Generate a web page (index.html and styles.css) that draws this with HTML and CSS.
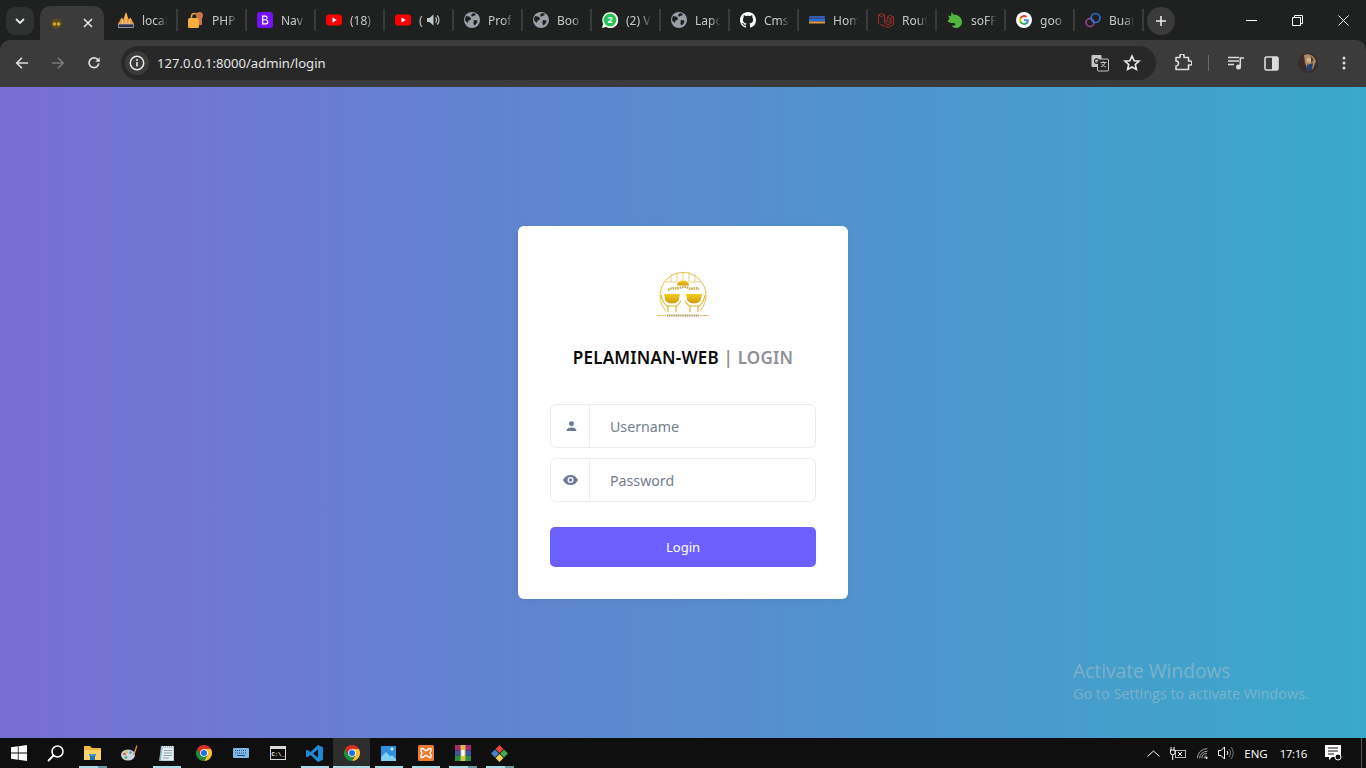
FILE: index.html
```html
<!DOCTYPE html>
<html lang="en">
  <head>
    <meta charset="UTF-8" />
    <meta name="viewport" content="width=device-width, initial-scale=1.0" />
    <title>Pelaminan-Web | Login</title>
    <link rel="stylesheet" href="styles.css">
  </head>
  <body>
    <svg class="defs" width="0" height="0">
      <symbol id="globe" viewBox="0 0 16 16">
        <circle cx="8" cy="8" r="8" fill="#9aa0a6" />
        <path d="M2 4l3 .5 2 1.500-.5 2-2 .5-.5 2.500L1.500 9 1 7zM9 1l3 1-1 1.500-2 .5L8 5 7 3zM10 8l3.500 .5-.5 2.500-2.500 2.500-1-1.500V10z" fill="#1f2020" />
      </symbol>
      <symbol id="youtube" viewBox="0 0 16 16">
        <rect y="2.500" width="16" height="11" rx="3" fill="#f00" />
        <path d="M6.500 5.500L10.800 8l-4.300 2.500z" fill="#fff" />
      </symbol>
      <symbol id="chrome" viewBox="0 0 48 48">
        <path d="M44.800 12H24l10.400 18L24 48a24 24 0 0 0 20.800-36z" fill="#fbc02d" />
        <path d="M3.200 12A24 24 0 0 0 24 48l10.400-18-20.800 0z" fill="#1e8e3e" />
        <path d="M24 0A24 24 0 0 0 3.200 12L13.600 30 24 12h20.800A24 24 0 0 0 24 0z" fill="#d93025" />
        <circle cx="24" cy="24" r="11.500" fill="#fff" />
        <circle cx="24" cy="24" r="9" fill="#1a73e8" />
      </symbol>
    </svg>

    <div class="browser">
      <header class="tabstrip">
        <button class="tab-search">
          <svg width="12" height="12" viewBox="0 0 12 12"><path d="M2 4l4 4 4-4" fill="none" stroke="#e8eaed" stroke-width="1.800" /></svg>
        </button>

        <div class="tab tab-active">
          <svg class="favicon-small" viewBox="0 0 12 12">
            <circle cx="6" cy="6" r="5.800" fill="#5a4d1c" />
            <circle cx="3.800" cy="6.500" r="1.900" fill="#d6ab22" />
            <circle cx="8.200" cy="6.500" r="1.900" fill="#d6ab22" />
          </svg>
          <svg class="tab-close" width="10" height="10" viewBox="0 0 10 10"><path d="M1 1l8 8M9 1L1 9" stroke="#e8eaed" stroke-width="1.500" /></svg>
        </div>

        <div class="tab tab-first">
          <svg class="favicon" viewBox="0 0 16 16">
            <path d="M0 12L3.500 5.500 5 8 8 0l3 8 1.500-2.500L16 12z" fill="#f0962e" />
            <path d="M8 1.500V12M4 6.500L5 12M12 6.500L11 12" stroke="#f7e6c8" stroke-width=".8" />
            <rect x=".5" y="12" width="15" height="3.500" fill="#2c3147" stroke="#b8bdd0" stroke-width=".7" />
          </svg>
          <span class="tab-title">local</span>
        </div>
        <div class="tab">
          <svg class="favicon" viewBox="0 0 16 16">
            <path d="M3.500 6V4.500A3 3 0 0 1 9.500 4.500V6" fill="none" stroke="#e8a24a" stroke-width="1.500" />
            <circle cx="11.500" cy="3.500" r="3.500" fill="#c8764a" />
            <rect y="6" width="11" height="10" rx="1.500" fill="#f5ad3b" />
            <rect x="11" y="6" width="3" height="7" fill="#c8764a" />
          </svg>
          <span class="tab-title">PHP</span>
        </div>
        <div class="tab">
          <svg class="favicon" viewBox="0 0 16 16">
            <rect width="16" height="16" rx="2.500" fill="#7511f2" />
            <path d="M5 3.500h3.500a2.200 2.200 0 0 1 .8 4.200A2.400 2.400 0 0 1 8.700 12.500H5zM6.300 4.700v2.500h2a1.250 1.250 0 0 0 0-2.500zM6.300 8.300v3h2.300a1.500 1.500 0 0 0 0-3z" fill="#fff" fill-rule="evenodd" />
          </svg>
          <span class="tab-title">Nav</span>
        </div>
        <div class="tab">
          <svg class="favicon" viewBox="0 0 16 16"><use href="#youtube" /></svg>
          <span class="tab-title">(18)</span>
        </div>
        <div class="tab">
          <svg class="favicon" viewBox="0 0 16 16"><use href="#youtube" /></svg>
          <span class="tab-title tab-title-short">(</span>
          <svg class="tab-audio" width="14" height="14" viewBox="0 0 14 14">
            <path d="M1 5h2.500L7.500 1.500v11L3.500 9H1z" fill="#c4c7c5" />
            <path d="M9.500 4.500a3.500 3.500 0 0 1 0 5M11 2.500a6 6 0 0 1 0 9" fill="none" stroke="#c4c7c5" stroke-width="1.200" />
          </svg>
        </div>
        <div class="tab">
          <svg class="favicon" viewBox="0 0 16 16"><use href="#globe" /></svg>
          <span class="tab-title">Prof</span>
        </div>
        <div class="tab">
          <svg class="favicon" viewBox="0 0 16 16"><use href="#globe" /></svg>
          <span class="tab-title">Boo</span>
        </div>
        <div class="tab">
          <svg class="favicon" viewBox="0 0 16 16">
            <path d="M0 16l1.200-4.200A8 8 0 1 1 4.200 15z" fill="#fff" />
            <circle cx="8" cy="8" r="6.500" fill="#25c25a" />
            <text class="favicon-badge" x="8" y="11">2</text>
          </svg>
          <span class="tab-title">(2) V</span>
        </div>
        <div class="tab">
          <svg class="favicon" viewBox="0 0 16 16"><use href="#globe" /></svg>
          <span class="tab-title">Lapo</span>
        </div>
        <div class="tab">
          <svg class="favicon" viewBox="0 0 16 16">
            <path fill="#fff" fill-rule="evenodd" d="M8 0C3.580 0 0 3.580 0 8c0 3.540 2.290 6.530 5.470 7.590.4.070.55-.17.550-.38 0-.19-.01-.82-.01-1.490-2.010.37-2.530-.49-2.690-.94-.09-.23-.48-.94-.82-1.130-.28-.15-.68-.52-.01-.53.630-.01 1.080.58 1.230.82.720 1.210 1.870.870 2.330.66.070-.52.280-.87.510-1.070-1.780-.2-3.640-.89-3.640-3.950 0-.87.310-1.590.820-2.150-.08-.2-.36-1.020.08-2.120 0 0 .67-.21 2.200.820.640-.18 1.320-.27 2-.27s1.360.090 2 .27c1.530-1.040 2.200-.820 2.200-.820.440 1.100.160 1.920.080 2.120.510.560.820 1.270.820 2.150 0 3.070-1.870 3.750-3.650 3.950.290.250.540.730.540 1.480 0 1.070-.010 1.930-.010 2.200 0 .210.150.460.550.380A8.013 8.013 0 0 0 16 8c0-4.420-3.580-8-8-8z" />
          </svg>
          <span class="tab-title">Cms</span>
        </div>
        <div class="tab">
          <svg class="favicon" viewBox="0 0 16 16">
            <rect y="4" width="16" height="3" fill="#2b4c9a" />
            <path d="M1 5h14" stroke="#7f9ad8" stroke-dasharray="1.500 1" stroke-width=".7" />
            <rect y="7" width="16" height="2.500" fill="#2a6fc9" />
            <rect y="9.500" width="16" height="2" fill="#e09a3e" />
          </svg>
          <span class="tab-title">Hom</span>
        </div>
        <div class="tab">
          <svg class="favicon" viewBox="0 0 16 16">
            <path d="M.5 3L3.500 1.300 6.500 3v8l3.500 2 3.200-1.900V8.500L10 10.300 6.500 8.300M.5 3v8.500L10 15.500l5.500-3.200V5L12.300 3.200 9.300 5v3.500M3.500 4.700L.5 3M3.500 4.700L6.500 3M12.300 6.800L9.300 5M12.300 6.800L15.500 5M12.300 6.800v1.700" fill="none" stroke="#a8312a" stroke-width=".9" stroke-linejoin="round" />
          </svg>
          <span class="tab-title">Rout</span>
        </div>
        <div class="tab">
          <svg class="favicon" viewBox="0 0 16 16">
            <path d="M4.500 0l2 2.500c4.500 0 8.500 3 8.500 7.500 0 3.500-3 6-6 6-2 0-3.500-1-4.500-2.500 2 .5 4 0 4-1.500C8.500 11 6 11 4 11L.5 9.500 2.500 6.500 1 3.500l3 .8z" fill="#4fb83c" />
          </svg>
          <span class="tab-title">soFF</span>
        </div>
        <div class="tab">
          <svg class="favicon" viewBox="0 0 16 16">
            <circle cx="8" cy="8" r="8" fill="#fff" />
            <path d="M12.800 8.200c0-.4 0-.7-.1-1H8v1.900h2.700a2.300 2.300 0 0 1-1 1.500v1.300h1.600c1-.9 1.500-2.200 1.500-3.700z" fill="#4285f4" />
            <path d="M8 13c1.300 0 2.400-.4 3.300-1.200l-1.600-1.300c-.4.300-1 .5-1.700.5-1.300 0-2.400-.9-2.800-2H3.600v1.300A5 5 0 0 0 8 13z" fill="#34a853" />
            <path d="M5.200 9a3 3 0 0 1 0-2V5.700H3.600a5 5 0 0 0 0 4.600z" fill="#fbbc05" />
            <path d="M8 5c.7 0 1.400.2 1.900.7l1.400-1.400A5 5 0 0 0 3.600 5.700L5.200 7c.4-1.200 1.500-2 2.800-2z" fill="#ea4335" />
          </svg>
          <span class="tab-title">goo</span>
        </div>
        <div class="tab">
          <svg class="favicon" viewBox="0 0 16 16">
            <circle cx="5" cy="10.500" r="4" fill="none" stroke="#9c4a9e" stroke-width="1.500" />
            <circle cx="10.500" cy="6" r="4.500" fill="none" stroke="#2a6fc9" stroke-width="1.700" />
          </svg>
          <span class="tab-title">Buat</span>
        </div>

        <button class="new-tab">
          <svg width="12" height="12" viewBox="0 0 12 12"><path d="M6 1v10M1 6h10" stroke="#e8eaed" stroke-width="1.600" /></svg>
        </button>

        <div class="window-controls">
          <svg width="11" height="11" viewBox="0 0 11 11"><path d="M0 5.500h11" stroke="#fff" /></svg>
          <svg width="11" height="11" viewBox="0 0 11 11"><path d="M.5 2.500h8v8h-8zM2.500 2.500v-2h8v8h-2" fill="none" stroke="#fff" /></svg>
          <svg width="11" height="11" viewBox="0 0 11 11"><path d="M.5 .5l10 10M10.500 .5l-10 10" stroke="#fff" /></svg>
        </div>
      </header>

      <div class="toolbar">
        <svg class="tool-back" width="14" height="14" viewBox="0 0 16 16"><path d="M15 8H2M8 2L2 8l6 6" fill="none" stroke="#dcdcdc" stroke-width="1.900" /></svg>
        <svg class="tool-forward" width="14" height="14" viewBox="0 0 16 16"><path d="M1 8h13M8 2l6 6-6 6" fill="none" stroke="#7a7a7a" stroke-width="1.900" /></svg>
        <svg class="tool-reload" width="14" height="14" viewBox="0 0 16 16"><path d="M13.500 8.500A5.600 5.600 0 1 1 12 3.800L14 6" fill="none" stroke="#dcdcdc" stroke-width="1.900" /><path d="M14.500 1.500v5h-5z" fill="#dcdcdc" /></svg>

        <div class="omnibox">
          <span class="site-info">
            <svg width="16" height="16" viewBox="0 0 16 16">
              <circle cx="8" cy="8" r="6.700" fill="none" stroke="#e8eaed" stroke-width="1.500" />
              <path d="M8 7v4.500" stroke="#e8eaed" stroke-width="1.600" />
              <circle cx="8" cy="4.900" r="1" fill="#e8eaed" />
            </svg>
          </span>
          <span class="url">127.0.0.1:8000/admin/login</span>
          <svg class="omni-translate" width="18" height="18" viewBox="0 0 18 18">
            <rect x="0.500" y="1" width="10" height="12" rx="1" fill="#c4c7c5" />
            <rect x="6.500" y="5" width="11" height="12" rx="1" fill="#282828" stroke="#c4c7c5" />
            <path d="M7.500 5.500a2.300 2.300 0 1 0 .5 2.500H5.500" fill="none" stroke="#282828" stroke-width="1.200" />
            <path d="M9.500 8.500h6M12.500 7.500v1M14 8.500c-.5 2-2 3.500-4 4.500M10.800 9.800c.8 1.400 2.200 2.600 4 3.200" fill="none" stroke="#c4c7c5" />
          </svg>
          <svg class="omni-star" width="18" height="18" viewBox="0 0 18 18"><path d="M9 2l2.100 4.700 5 .5-3.800 3.300 1.100 5L9 13l-4.400 2.500 1.100-5L1.900 7.200l5-.5z" fill="none" stroke="#e8eaed" stroke-width="1.600" /></svg>
        </div>

        <svg class="tool-extension" width="18" height="18" viewBox="0 0 18 18"><path d="M2 4.500h4V3a2 2 0 0 1 4 0v1.500h4.500V8H16a2 2 0 0 1 0 4h-1.500v4.500H2V13a2.500 2.500 0 0 0 0-5z" fill="none" stroke="#dcdcdc" stroke-width="1.600" stroke-linejoin="round" transform="translate(0 -1)" /></svg>
        <span class="tool-separator"></span>
        <svg class="tool-media" width="16" height="14" viewBox="0 0 16 14">
          <path d="M0 1.500h11M0 5h11M0 8.500h6" stroke="#dcdcdc" stroke-width="1.500" />
          <circle cx="10.500" cy="11" r="2.500" fill="#dcdcdc" />
          <path d="M12.300 11V2H16" fill="none" stroke="#dcdcdc" stroke-width="1.500" />
        </svg>
        <svg class="tool-panel" width="15" height="15" viewBox="0 0 15 15">
          <rect x="1" y="1" width="13" height="13" rx="1.500" fill="none" stroke="#dcdcdc" stroke-width="1.600" />
          <rect x="8" y="1" width="6" height="13" fill="#dcdcdc" />
        </svg>
        <svg class="tool-avatar" width="20" height="20" viewBox="0 0 20 20">
          <circle cx="10" cy="10" r="10" fill="#3a2c26" />
          <path d="M6 2c5-2 10 1 12 6l-3 8-5 2-3-8z" fill="#a98a66" />
          <path d="M9 12l6-2-1 7-6 2z" fill="#27406a" />
          <circle cx="11" cy="7" r="2.500" fill="#d0b48e" />
          <path d="M13 3l3 4-3 3z" fill="#5a4230" />
        </svg>
        <svg class="tool-menu" width="4" height="14" viewBox="0 0 4 14"><circle cx="2" cy="2" r="1.500" fill="#dcdcdc" /><circle cx="2" cy="7" r="1.500" fill="#dcdcdc" /><circle cx="2" cy="12" r="1.500" fill="#dcdcdc" /></svg>
      </div>

      <main class="page">
        <div class="card">
          <svg class="logo" width="52" height="48" viewBox="0 0 52 48">
            <defs>
              <linearGradient id="gold" x1="0" y1="0" x2="0" y2="1">
                <stop offset="0" stop-color="#f4cb1c" />
                <stop offset="1" stop-color="#cf9c0c" />
              </linearGradient>
            </defs>
            <path d="M9 41A23 23 0 1 1 43 41" fill="none" stroke="#dcae2a" stroke-width=".8" />
            <path d="M14 4v8M20 2v9M26 1.500v9M32 2v9M38 4v8M8 12h36" stroke="#e3bd52" stroke-width=".7" fill="none" />
            <path d="M20 15.500a6 5 0 0 1 12 0z" fill="url(#gold)" />
            <path d="M11 20c4-3 7-1 11-2s6-2 9 0 7-1 11 1" fill="none" stroke="#c4a748" stroke-width="2.400" stroke-dasharray="1.600 .8" />
            <path d="M7 24H23L21.500 31Q15 36 8.500 31z" fill="url(#gold)" />
            <path d="M29 24H45L43.500 31Q37 36 30.500 31z" fill="url(#gold)" />
            <path d="M4 25c1 5 3 9 6 11h10l4-5M48 25c-1 5-3 9-6 11H32l-4-5M11 36v6M19 36v6M33 36v6M41 36v6" fill="none" stroke="#e0b21e" stroke-width="1.100" />
            <path d="M0 45.500h9M43 45.500h9" stroke="#dcae2a" stroke-width=".7" />
            <path d="M10 45.500h32" stroke="#a8935a" stroke-width="1.800" stroke-dasharray="1.200 .6" />
          </svg>

          <h4 class="card-title">PELAMINAN-WEB <span class="card-title-muted">| LOGIN</span></h4>

          <form class="login-form">
            <div class="input-group">
              <span class="input-icon">
                <svg class="icon-user" width="11" height="11" viewBox="0 0 12 12">
                  <circle cx="6" cy="3" r="2.700" fill="#6b7a99" />
                  <path d="M.5 11c0-2.800 2.500-4 5.500-4s5.500 1.200 5.500 4z" fill="#6b7a99" />
                </svg>
              </span>
              <input class="input-field" type="text" placeholder="Username" />
            </div>
            <div class="input-group">
              <span class="input-icon">
                <svg width="15" height="10" viewBox="0 0 15 10">
                  <path d="M0 5c1.500-3 4-5 7.500-5S13.500 2 15 5c-1.500 3-4 5-7.500 5S1.500 8 0 5z" fill="#6b7a99" />
                  <circle cx="7.500" cy="5" r="3" fill="#fff" />
                  <circle cx="7.500" cy="5" r="1.700" fill="#6b7a99" />
                </svg>
              </span>
              <input class="input-field" type="password" placeholder="Password" />
            </div>
            <button class="login-button" type="button">Login</button>
          </form>
        </div>

        <div class="activate">
          <p class="activate-title">Activate Windows</p>
          <p class="activate-text">Go to Settings to activate Windows.</p>
        </div>
      </main>

      <footer class="taskbar">
        <div class="task-item">
          <svg width="16" height="16" viewBox="0 0 16 16"><path d="M0 2.300l6.800-1v6.300H0zM7.600 1.200L16 0v7.600H7.600zM0 8.400h6.800v6.300l-6.800-1zM7.600 8.400H16V16l-8.400-1.200z" fill="#fff" /></svg>
        </div>
        <div class="task-item">
          <svg width="17" height="17" viewBox="0 0 17 17"><circle cx="10.500" cy="6.500" r="5.500" fill="none" stroke="#fff" stroke-width="1.500" /><path d="M6.500 10.500L1 16" stroke="#fff" stroke-width="1.800" /></svg>
        </div>
        <div class="task-item task-running task-stacked">
          <svg width="17" height="16" viewBox="0 0 17 16">
            <path d="M0 1h6l2 2h9v12H0z" fill="#f0b93a" />
            <rect y="5" width="17" height="10" fill="#fcd462" />
            <rect x="5" y="9" width="7" height="2" fill="#3c9ad6" />
            <rect x="6" y="11" width="5" height="4" fill="#1f72b8" />
          </svg>
        </div>
        <div class="task-item">
          <svg width="18" height="16" viewBox="0 0 18 16">
            <ellipse cx="7" cy="10" rx="7" ry="5.500" fill="#c7d4e0" />
            <circle cx="3.500" cy="9" r="1.300" fill="#e0483c" />
            <circle cx="6" cy="7" r="1.300" fill="#f0b93a" />
            <circle cx="9.500" cy="7.500" r="1.300" fill="#3c9ad6" />
            <circle cx="5" cy="12.500" r="1.300" fill="#49a84c" />
            <path d="M15.500 0l1 1-3 9-1.500-.5z" fill="#e08a2e" />
          </svg>
        </div>
        <div class="task-item task-running">
          <svg width="16" height="17" viewBox="0 0 16 17">
            <path d="M2 1h13v15H0z" fill="#8fb5c2" />
            <path d="M3.500 2.500h11v13H2z" fill="#e6eef2" />
            <path d="M5 5.500h8M4.500 8h8.500M4.500 10.500h8.500M4 13h6" stroke="#8aa5b1" />
            <path d="M3 1.500h12" stroke="#fff" stroke-dasharray="1 1" />
          </svg>
        </div>
        <div class="task-item">
          <svg width="16" height="16" viewBox="0 0 48 48"><use href="#chrome" /></svg>
        </div>
        <div class="task-item">
          <svg width="16" height="10" viewBox="0 0 16 10">
            <rect width="16" height="10" rx="1" fill="#7fb9e8" />
            <path d="M2 2.500h12M2 5h12" stroke="#1d4f7c" stroke-dasharray="1 1" />
            <path d="M4 7.500h8" stroke="#1d4f7c" />
          </svg>
        </div>
        <div class="task-item">
          <svg width="16" height="14" viewBox="0 0 16 14">
            <rect x=".5" y=".5" width="15" height="13" fill="#0c0c0c" stroke="#d8d8d8" />
            <rect y="0" width="16" height="3" fill="#d8d8d8" />
            <text class="cmd-prompt" x="1.500" y="10">C:\_</text>
          </svg>
        </div>
        <div class="task-item task-running">
          <svg width="17" height="17" viewBox="0 0 17 17">
            <path d="M12 0l5 2.300v12.400L12 17 4.500 10 1.500 12.300 0 11.500V5.500l1.500-.8L4.500 7z" fill="#1f8ad2" />
            <path d="M12 4.500L7 8.500l5 4z" fill="#0e0e0e" />
          </svg>
        </div>
        <div class="task-item task-running task-active">
          <svg width="16" height="16" viewBox="0 0 48 48"><use href="#chrome" /></svg>
        </div>
        <div class="task-item task-running">
          <svg width="15" height="15" viewBox="0 0 15 15">
            <rect width="15" height="15" fill="#2f8fe0" />
            <path d="M0 15V11l5-5 9 9zM8 12l3-3 4 4v2H11z" fill="#7fd0f5" />
            <path d="M11 1l.8 1.500L13.500 3l-1.700.5L11 5l-.8-1.500L8.500 3l1.700-.5z" fill="#fff" />
          </svg>
        </div>
        <div class="task-item task-running">
          <svg width="16" height="16" viewBox="0 0 16 16">
            <rect width="16" height="16" rx="1.500" fill="#ee7a30" />
            <path d="M4 3.500c2 0 2 2 4 2s2-2 4-2 1 2.500 0 4.500c1 2 2 4.500 0 4.500s-2-2-4-2-2 2-4 2-1-2.500 0-4.500c-1-2-2-4.500 0-4.500z" fill="none" stroke="#fff" stroke-width="1.400" />
          </svg>
        </div>
        <div class="task-item task-running task-stacked">
          <svg width="16" height="16" viewBox="0 0 16 16">
            <rect width="16" height="5.500" fill="#a6286e" />
            <rect y="5.500" width="16" height="5" fill="#3f51a8" />
            <rect y="10.500" width="16" height="5.500" fill="#2e8b45" />
            <rect x="5.500" width="5" height="16" fill="#e8d24a" opacity=".85" />
            <rect x="6.500" y="5" width="3" height="6" fill="#fff" />
          </svg>
        </div>
        <div class="task-item task-running task-stacked">
          <svg width="17" height="17" viewBox="0 0 17 17">
            <path d="M8.500 0l4 4-4 4-4-4z" fill="#e04a3c" />
            <path d="M13 4.500l4 4-4 4-4-4z" fill="#49a84c" />
            <path d="M4 4.500l4 4-4 4-4-4z" fill="#4a7fd0" />
            <path d="M8.500 9l4 4-4 4-4-4z" fill="#f0d060" />
          </svg>
        </div>

        <div class="tray">
          <svg class="tray-chevron" width="13" height="7" viewBox="0 0 13 7"><path d="M.5 6.500L6.500 1l6 5.500" fill="none" stroke="#fff" /></svg>
          <svg class="tray-battery" width="16" height="14" viewBox="0 0 16 14">
            <path d="M3 1v3M0 1v3" stroke="#fff" transform="translate(1 0)" />
            <path d="M.5 4h4.500v2.500a2.200 2.200 0 0 1-4.500 0zM2.700 9v5" fill="none" stroke="#fff" />
            <rect x="5.500" y="4.500" width="10" height="7" fill="none" stroke="#fff" opacity=".7" />
            <path d="M8 6l4 4M12 6l-4 4" stroke="#fff" />
          </svg>
          <svg class="tray-wifi" width="13" height="13" viewBox="0 0 15 13">
            <path d="M.5 12A11 11 0 0 1 12 1M3 12a8.500 8.500 0 0 1 9-8M5.500 12a6 6 0 0 1 6-5.500M8 12a3.500 3.500 0 0 1 3-3" fill="none" stroke="#bbb" />
            <circle cx="11" cy="11.500" r="1.300" fill="#fff" />
          </svg>
          <svg class="tray-volume" width="16" height="14" viewBox="0 0 16 14">
            <path d="M.5 4.500h2.500L6.500 1v12L3 9.500H.5z" fill="none" stroke="#fff" />
            <path d="M9 5a3 3 0 0 1 0 4" fill="none" stroke="#fff" />
            <path d="M11 3a6 6 0 0 1 0 8M13 1a9 9 0 0 1 0 12" fill="none" stroke="#777" />
          </svg>
          <span class="tray-lang">ENG</span>
          <span class="tray-clock">17:16</span>
          <svg class="tray-notify" width="17" height="16" viewBox="0 0 17 16">
            <path d="M0 0h16v12H7l-3 3v-3H0z" fill="#fff" />
            <path d="M3 3h10M3 6h10M3 9h6" stroke="#0f0f0f" />
            <circle cx="13" cy="12" r="3" fill="#0f0f0f" stroke="#fff" />
          </svg>
          <span class="tray-edge"></span>
        </div>
      </footer>
    </div>
  </body>
</html>
```

FILE: styles.css
```css
* {
  box-sizing: border-box;
}

html,
body {
  margin: 0;
  padding: 0;
  height: 100%;
  overflow: hidden;
}

body {
  font-family: "Noto Sans", sans-serif;
  background-color: #1f2020;
}

.defs {
  position: absolute;
}

.browser {
  display: flex;
  flex-direction: column;
  height: 768px;
}

/* tab strip */
.tabstrip {
  display: flex;
  align-items: center;
  height: 40px;
  flex: none;
  background-color: #1f2020;
}

button {
  border: 0;
  padding: 0;
  font: inherit;
}

.tab-search {
  display: flex;
  align-items: center;
  justify-content: center;
  width: 28px;
  height: 28px;
  margin-left: 6px;
  margin-top: 1px;
  background-color: #303131;
  border-radius: 9px;
}

.tab {
  display: flex;
  align-items: center;
  flex: none;
  width: 69px;
  height: 22px;
  padding-left: 10px;
  border-right: 2px solid #3a3b3b;
}

.tab-first {
  width: 74px;
  padding-left: 14px;
}

.tab-active {
  width: 64px;
  height: 34px;
  margin-left: 6px;
  margin-top: 6px;
  padding-left: 11px;
  background-color: #3b3b3b;
  border-right: 0;
  border-radius: 10px 10px 0 0;
  justify-content: space-between;
  padding-right: 11px;
}

.favicon {
  width: 16px;
  height: 16px;
  flex: none;
}

.favicon-small {
  width: 11px;
  height: 11px;
}

.favicon-badge {
  font-family: "Noto Sans", sans-serif;
  font-size: 9px;
  font-weight: 700;
  fill: #fff;
  text-anchor: middle;
}

.tab-title {
  width: 31px;
  margin-left: 8px;
  overflow: hidden;
  white-space: nowrap;
  color: #c7c9c9;
  font-size: 12px;
  -webkit-mask-image: linear-gradient(to right, #000 50%, transparent 82%);
  mask-image: linear-gradient(to right, #000 50%, transparent 82%);
}

.tab-title-short {
  width: 6px;
  -webkit-mask-image: none;
  mask-image: none;
}

.tab-audio {
  margin-left: 1px;
  flex: none;
}

.new-tab {
  display: flex;
  align-items: center;
  justify-content: center;
  width: 28px;
  height: 28px;
  margin-left: 3px;
  margin-top: 1px;
  background-color: #3b3b3b;
  border-radius: 50%;
}

.window-controls {
  display: flex;
  align-items: center;
  gap: 35px;
  margin-left: auto;
  margin-right: 17px;
}

/* toolbar */
.toolbar {
  display: flex;
  align-items: center;
  flex: none;
  height: 47px;
  background-color: #3b3b3b;
  border-radius: 10px 10px 0 0;
  padding-left: 15px;
  padding-bottom: 1px;
}

.tool-forward {
  margin-left: 22px;
}

.tool-reload {
  margin-left: 22px;
}

.omnibox {
  display: flex;
  align-items: center;
  width: 1035px;
  height: 34px;
  margin-left: 20px;
  background-color: #282828;
  border-radius: 17px;
  padding-left: 4px;
}

.site-info {
  display: flex;
  align-items: center;
  justify-content: center;
  width: 24px;
  height: 24px;
  background-color: #3b3b3b;
  border-radius: 50%;
}

.url {
  margin-left: 8px;
  color: #e3e3e3;
  font-size: 13.1px;
}

.omni-translate {
  margin-left: auto;
}

.omni-star {
  margin-left: 14px;
  margin-right: 15px;
}

.tool-extension {
  margin-left: 18px;
}

.tool-separator {
  width: 1px;
  height: 16px;
  margin-left: 16px;
  background-color: #6a6a6a;
}

.tool-media {
  margin-left: 19px;
}

.tool-panel {
  margin-left: 20px;
}

.tool-avatar {
  margin-left: 19px;
}

.tool-menu {
  margin-left: 24px;
}

/* login page */
.page {
  position: relative;
  display: flex;
  align-items: flex-start;
  justify-content: center;
  flex: 1;
  padding-top: 139px;
  background: linear-gradient(to right, #786fd3, #39a9cb);
}

.card {
  display: flex;
  flex-direction: column;
  align-items: center;
  width: 330px;
  height: 373px;
  padding: 44px 32px 32px;
  background-color: #fff;
  border-radius: 6px;
  box-shadow: 0 2px 6px rgba(67, 89, 113, 0.12);
}

.logo {
  flex: none;
}

.card-title {
  margin: 27px 0 0;
  color: #0a0a0a;
  font-size: 17px;
  font-weight: 600;
  line-height: 26px;
  letter-spacing: 0.2px;
}

.card-title-muted {
  color: #8f8f96;
}

.login-form {
  display: flex;
  flex-direction: column;
  width: 100%;
  margin-top: 33px;
}

.input-group {
  display: flex;
  height: 44px;
  margin-bottom: 10px;
  border: 1px solid #e9ecf3;
  border-radius: 6px;
}

.input-icon {
  display: flex;
  align-items: center;
  justify-content: center;
  width: 39px;
  flex: none;
  border-right: 1px solid #e9ecf3;
}

.icon-user {
  margin-left: 3px;
}

.input-field {
  flex: 1;
  min-width: 0;
  padding: 0 20px;
  border: 0;
  outline: 0;
  background: transparent;
  border-radius: 6px;
  font-family: "Noto Sans", sans-serif;
  font-size: 14.2px;
  color: #697a8d;
}

.input-field::placeholder {
  color: #737d8c;
  opacity: 1;
}

.login-button {
  height: 40px;
  margin-top: 15px;
  background-color: #6c5fff;
  border-radius: 5px;
  color: #fff;
  font-family: "Noto Sans", sans-serif;
  font-size: 13px;
  font-weight: 400;
}

/* windows watermark */
.activate {
  position: absolute;
  right: 57px;
  top: 572px;
  width: 236px;
  font-family: "Open Sans", sans-serif;
  color: rgba(200, 200, 200, 0.45);
}

.activate p {
  margin: 0;
  white-space: nowrap;
}

.activate-title {
  font-size: 19.2px;
  line-height: 24px;
}

.activate-text {
  font-size: 14.4px;
  line-height: 21px;
}

/* taskbar */
.taskbar {
  display: flex;
  align-items: stretch;
  flex: none;
  height: 30px;
  background-color: #0f0f0f;
}

.task-item {
  position: relative;
  display: flex;
  align-items: center;
  justify-content: center;
  width: 37px;
  flex: none;
}

.task-running::after {
  content: "";
  position: absolute;
  left: 5px;
  right: 4px;
  bottom: 0;
  height: 2px;
  background-color: #a9dbe6;
}

.task-stacked::before {
  content: "";
  position: absolute;
  right: 4px;
  bottom: 0;
  width: 9px;
  height: 2px;
  background-color: #6b9aa5;
  z-index: 1;
}

.task-active {
  background-color: #2d2d2d;
}

.task-active::after {
  left: 0;
  right: 0;
}

.cmd-prompt {
  font-family: "Liberation Mono", monospace;
  font-size: 5.5px;
  font-weight: 700;
  fill: #fff;
}

.tray {
  display: flex;
  align-items: center;
  margin-left: auto;
  color: #fff;
  font-family: "Open Sans", sans-serif;
  font-size: 11.5px;
}

.tray-battery {
  margin-left: 10px;
}

.tray-wifi {
  margin-left: 11px;
}

.tray-volume {
  margin-left: 8px;
}

.tray-lang {
  margin-left: 10px;
}

.tray-clock {
  margin-left: 12px;
  letter-spacing: -0.4px;
}

.tray-notify {
  margin-left: 18px;
}

.tray-edge {
  width: 1px;
  height: 30px;
  margin-left: 19px;
  margin-right: 4px;
  background-color: #555;
}
```
